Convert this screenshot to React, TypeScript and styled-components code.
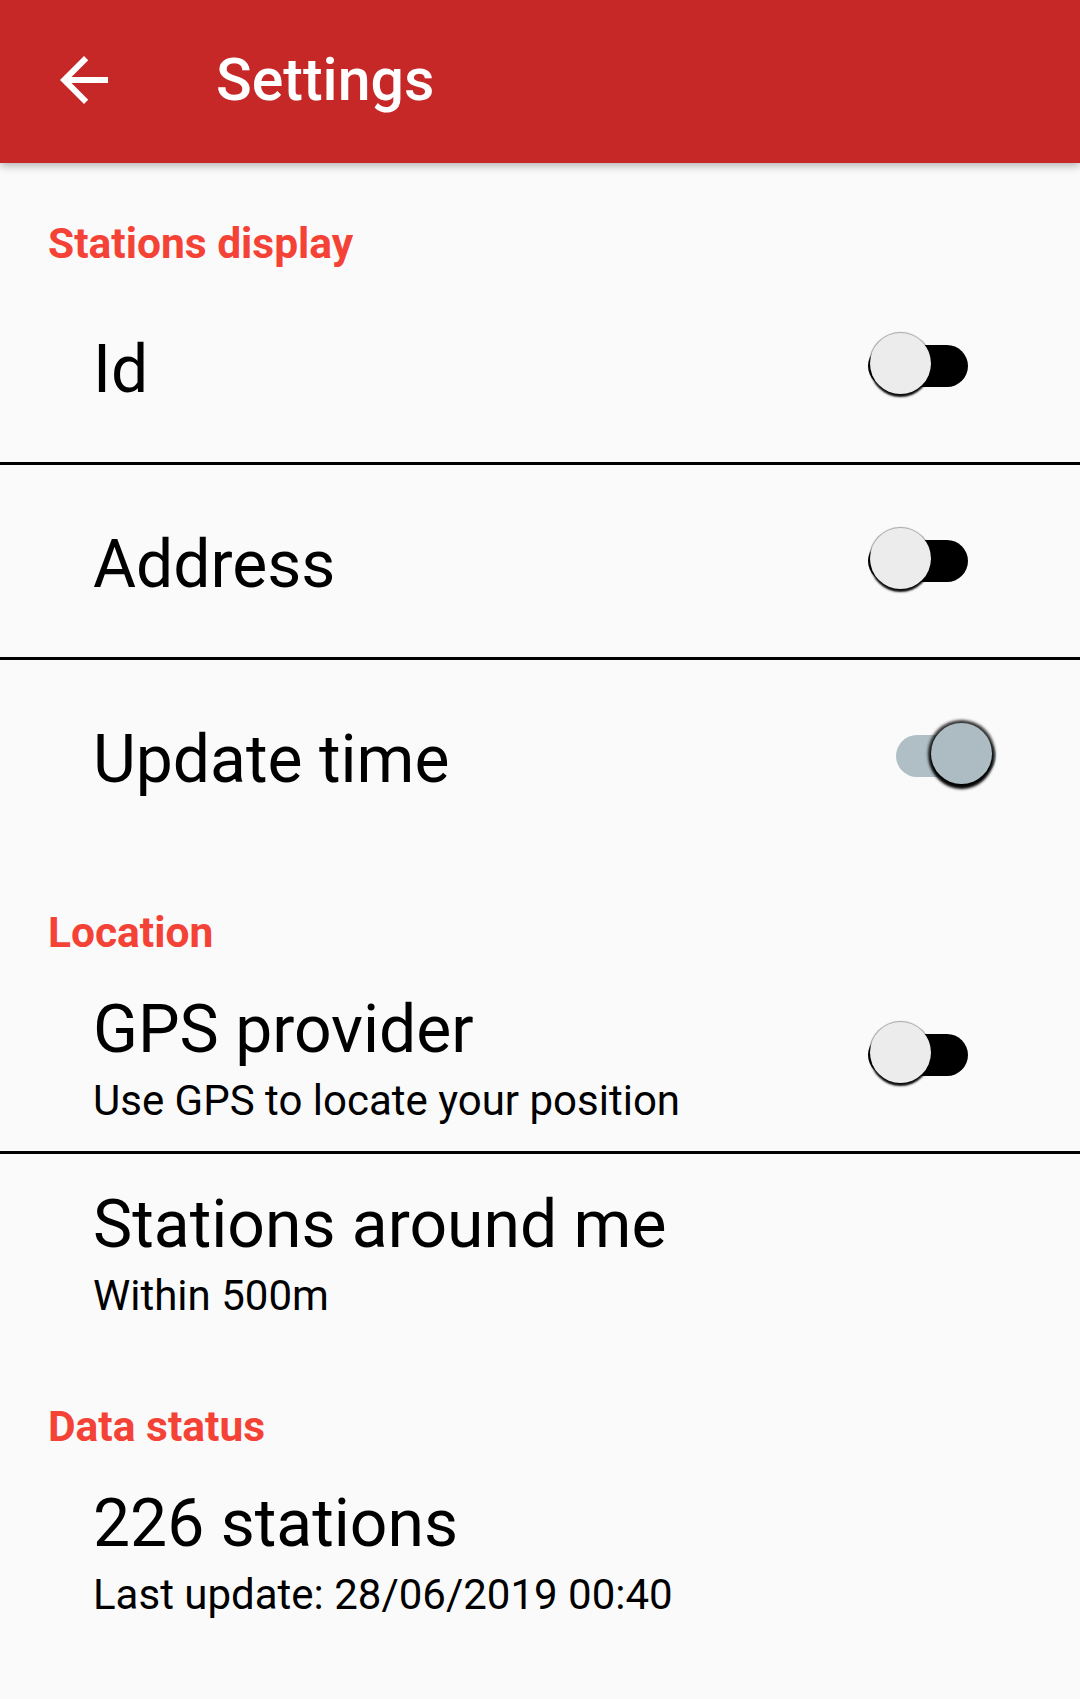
import React from "react";
import styled, { createGlobalStyle } from "styled-components";

const GlobalStyle = createGlobalStyle`
  html, body {
    margin: 0;
    padding: 0;
    background: #fafafa;
  }
  body {
    font-family: Roboto, "Noto Sans", "Liberation Sans", sans-serif;
    color: #000;
  }
  #root {
    min-height: 1699px;
    background: #fafafa;
  }
`;

const Page = styled.div`
  display: flex;
  flex-direction: column;
  width: 1080px;
  min-height: 1699px;
  background: #fafafa;
`;

const AppBar = styled.header`
  position: relative;
  z-index: 1;
  display: flex;
  align-items: center;
  height: 163px;
  box-sizing: border-box;
  padding-bottom: 4px;
  background: #c62828;
  box-shadow: 0 3px 8px rgba(0, 0, 0, 0.28);
`;

const NavButton = styled.button`
  display: flex;
  align-items: center;
  justify-content: center;
  width: 168px;
  height: 150px;
  margin-right: 48px;
  padding: 0;
  border: none;
  background: transparent;
  svg {
    width: 72px;
    height: 72px;
    display: block;
  }
`;

const AppTitle = styled.h1`
  margin: 0;
  font-family: Roboto, sans-serif;
  font-weight: 500;
  font-size: 59px;
  line-height: 70px;
  color: #fff;
`;

const Category = styled.div`
  height: 107px;
  box-sizing: border-box;
  padding: 60px 0 0 48px;
  font-family: Roboto, sans-serif;
  font-weight: 700;
  font-size: 42.5px;
  line-height: 42px;
  color: #f44336;
`;

const Row = styled.div<{ $divider?: boolean }>`
  display: flex;
  align-items: center;
  min-height: 192px;
  padding-left: 93px;
  border-bottom: ${(p) => (p.$divider ? "3px solid #000" : "none")};
`;

const TextBlock = styled.div`
  flex: 1;
  display: flex;
  flex-direction: column;
  padding-top: 6px;
`;

const RowTitle = styled.div`
  font-family: Roboto, sans-serif;
  font-size: 66px;
  line-height: 77px;
  color: #000;
`;

const RowSummary = styled.div`
  margin-top: 8px;
  font-family: Roboto, sans-serif;
  font-size: 42px;
  line-height: 49px;
  color: #000;
`;

const SwitchRoot = styled.div<{ $on: boolean }>`
  position: relative;
  display: flex;
  align-items: center;
  width: 104px;
  height: 66px;
  margin-right: ${(p) => (p.$on ? "82px" : "110px")};
`;

const Track = styled.div<{ $on: boolean }>`
  width: 100px;
  height: 42px;
  margin-left: 2px;
  border-radius: 21px;
  background: ${(p) => (p.$on ? "#b0bec5" : "#000")};
`;

const Thumb = styled.div<{ $on: boolean }>`
  position: absolute;
  top: 0px;
  left: ${(p) => (p.$on ? "37px" : "4px")};
  width: 61px;
  height: 61px;
  border-radius: 50%;
  background: ${(p) => (p.$on ? "#adbbc2" : "#ececec")};
  box-shadow: ${(p) =>
    p.$on
      ? "0 0 3px 3px rgba(0,0,0,0.8), 0 4px 3px 1px rgba(0,0,0,0.95)"
      : "0 0 1px 1px rgba(0,0,0,0.35), 0 3px 2px rgba(0,0,0,0.95)"};
`;

const Switch: React.FC<{ on?: boolean }> = ({ on = false }) => (
  <SwitchRoot $on={on}>
    <Track $on={on} />
    <Thumb $on={on} />
  </SwitchRoot>
);

const BackArrow = () => (
  <svg viewBox="0 0 24 24" aria-hidden="true">
    <path
      fill="#fff"
      d="M20 11H7.83l5.59-5.59L12 4l-8 8 8 8 1.41-1.41L7.83 13H20v-2z"
    />
  </svg>
);

type Pref = {
  title: string;
  summary?: string;
  toggle?: "on" | "off";
  divider?: boolean;
};

const PrefRow: React.FC<Pref> = ({ title, summary, toggle, divider }) => (
  <Row $divider={divider}>
    <TextBlock>
      <RowTitle>{title}</RowTitle>
      {summary && <RowSummary>{summary}</RowSummary>}
    </TextBlock>
    {toggle && <Switch on={toggle === "on"} />}
  </Row>
);

export default function App() {
  return (
    <>
      <GlobalStyle />
      <Page>
        <AppBar>
          <NavButton aria-label="Back">
            <BackArrow />
          </NavButton>
          <AppTitle>Settings</AppTitle>
        </AppBar>

        <Category>Stations display</Category>
        <PrefRow title="Id" toggle="off" divider />
        <PrefRow title="Address" toggle="off" divider />
        <PrefRow title="Update time" toggle="on" />

        <Category>Location</Category>
        <PrefRow
          title="GPS provider"
          summary="Use GPS to locate your position"
          toggle="off"
          divider
        />
        <PrefRow title="Stations around me" summary="Within 500m" />

        <Category>Data status</Category>
        <PrefRow title="226 stations" summary="Last update: 28/06/2019 00:40" />
      </Page>
    </>
  );
}
